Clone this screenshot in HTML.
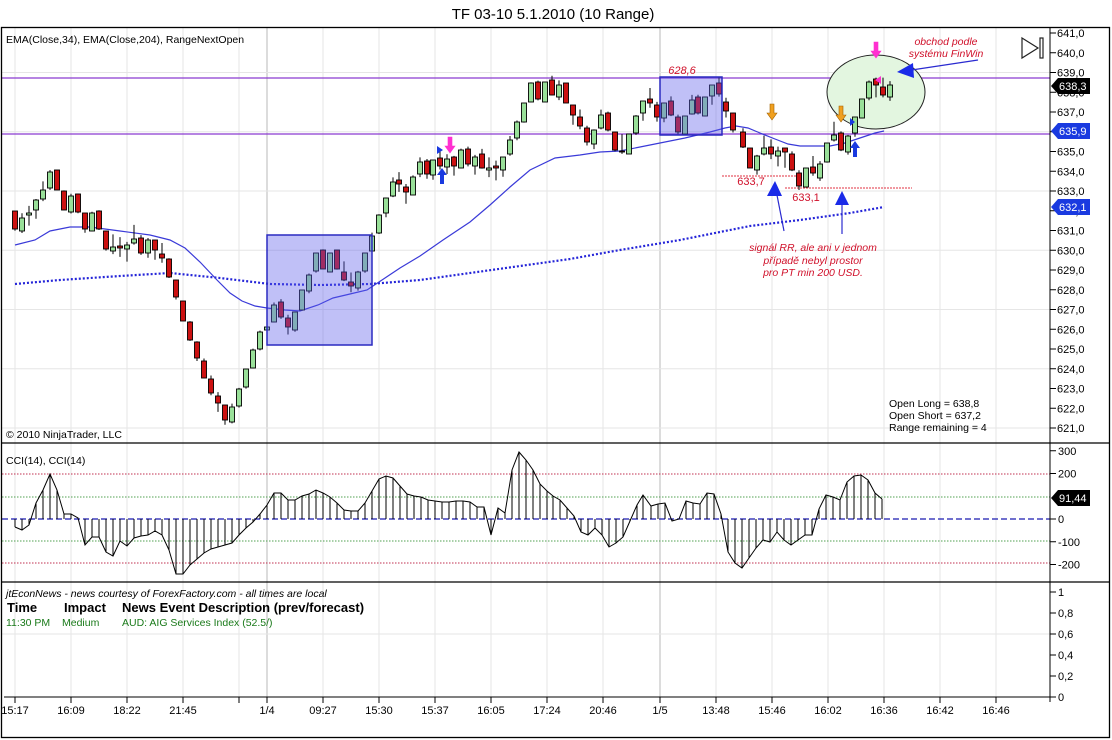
<!DOCTYPE html>
<html><head><meta charset="utf-8">
<style>
html,body{margin:0;padding:0;background:#fff;}
svg{display:block;font-family:"Liberation Sans",sans-serif;}
</style></head>
<body>
<svg id="s" width="1112" height="740" viewBox="0 0 1112 740" xmlns="http://www.w3.org/2000/svg">
<rect width="1112" height="740" fill="#fff"/>
<text x="553" y="19" font-size="15" text-anchor="middle" fill="#000">TF 03-10  5.1.2010 (10 Range)</text>
<g id="grid"></g>
<g id="main"></g>
<g id="ann"></g>
<g id="cci"></g>
<g id="axes"></g>
</svg>
<script>
const NS="http://www.w3.org/2000/svg";
function el(par,tag,attrs,txt){const e=document.createElementNS(NS,tag);for(const k in attrs)e.setAttribute(k,attrs[k]);if(txt!==undefined)e.textContent=txt;document.getElementById(par).appendChild(e);return e;}
const PX=v=>33+(641-v)*19.75;
// vertical grid
const gx=[15,71,127,183,239,323,379,435,491,547,603,716,772,828,884,940,996];
gx.forEach(x=>{el('grid','line',{x1:x,y1:28,x2:x,y2:697,stroke:'#e6e6e6','stroke-width':1});});
[267,660].forEach(x=>el('grid','line',{x1:x,y1:28,x2:x,y2:697,stroke:'#b8b8b8','stroke-width':1}));
// horizontal grid price
for(let p=621;p<=639;p+=3){const y=PX(p);el('grid','line',{x1:2,y1:y,x2:1050,y2:y,stroke:'#e6e6e6'});}
el('grid','line',{x1:2,y1:634,x2:1050,y2:634,stroke:'#e6e6e6'});
// purple lines
el('grid','line',{x1:2,y1:78,x2:1050,y2:78,stroke:'#8a3ad0','stroke-width':1.3});
el('grid','line',{x1:2,y1:134,x2:1050,y2:134,stroke:'#8a3ad0','stroke-width':1.3});
// ellipse
el('grid','ellipse',{cx:876,cy:92,rx:49,ry:37,fill:'#e3f6e0',stroke:'#222','stroke-width':1});
// EMA204 dotted
el('grid','polyline',{points:'15,284 60,280 120,276 170,273 220,278 270,284 320,285 370,284 420,280 470,273 520,266 570,259 620,250 680,240 750,226 800,220 850,213 884,207',fill:'none',stroke:'#2424d8','stroke-width':2.2,'stroke-dasharray':'2,2'});
// EMA34
el('grid','polyline',{points:'15,245 35,240 50,231 70,227 90,227 120,231 150,235 170,240 185,248 200,262 217,280 230,293 242,301 255,306 267,308 285,310 300,311 318,305 333,298 350,294 367,290 385,278 400,268 420,256 443,240 470,222 490,205 510,187 530,170 555,158 580,155 600,152 620,151 640,147 660,143 685,138 710,132 725,128 736,126 748,128 760,133 775,139 788,144 800,146 815,146 830,146 845,143 860,138 875,133 884,131',fill:'none',stroke:'#3a3ad8','stroke-width':1.2});
// dashed red support lines
el('grid','line',{x1:722,y1:176,x2:800,y2:176,stroke:'#e03040','stroke-dasharray':'2,1'});
el('grid','line',{x1:785,y1:188,x2:912,y2:188,stroke:'#e03040','stroke-dasharray':'2,1'});
// candles [x,top,bot,c]
const C=[
[15,211,229,'r'],[22,218,231,'g'],[29,213,215,'g'],[36,200,210,'g'],[43,190,199,'g'],[50,172,188,'g'],[57,170,190,'r'],[64,191,210,'r'],[71,196,212,'g'],[78,194,212,'r'],[85,213,229,'r'],[92,213,231,'g'],[99,211,229,'r'],[106,231,249,'r'],[113,247,251,'g'],[120,246,248,'r'],[127,245,249,'g'],[134,239,243,'g'],[141,238,253,'r'],[148,240,253,'g'],[155,240,250,'r'],[162,254,258,'r'],[169,259,277,'r'],[176,280,297,'r'],[183,301,321,'r'],[190,322,340,'r'],[197,342,358,'r'],[204,361,378,'r'],[211,379,393,'r'],[218,396,403,'r'],[225,405,420,'r'],[232,407,422,'g'],[239,389,406,'g'],[246,369,387,'g'],[253,350,368,'g'],[260,332,349,'g'],[267,327,330,'g'],[274,305,322,'g'],[281,302,317,'r'],[288,318,327,'r'],[295,312,330,'g'],[302,290,310,'g'],[309,275,291,'g'],[316,253,271,'g'],[323,250,269,'r'],[330,253,272,'g'],[337,250,269,'r'],[344,272,280,'r'],[351,282,286,'r'],[358,272,288,'g'],[365,253,271,'g'],[372,236,251,'g'],
[379,215,233,'g'],[386,198,213,'g'],[393,182,196,'g'],[399,180,184,'r'],[406,187,192,'r'],[413,177,195,'g'],[420,162,174,'g'],[427,161,174,'r'],[433,160,175,'g'],[440,158,166,'r'],[447,159,167,'g'],[454,157,166,'r'],[461,150,168,'g'],[468,149,164,'r'],[475,157,166,'g'],[482,154,168,'r'],[489,168,170,'g'],[496,166,168,'r'],[503,157,170,'g'],[510,140,154,'g'],[517,122,138,'g'],[524,103,122,'g'],[531,83,102,'g'],[538,82,99,'r'],[545,82,102,'g'],[552,80,95,'r'],[559,85,97,'g'],[566,83,103,'r'],[573,105,115,'r'],[580,117,126,'r'],[587,128,142,'r'],[594,130,144,'g'],[601,115,128,'g'],[608,113,130,'r'],[615,132,150,'r'],[622,151,152,'r'],[629,134,154,'g'],[636,116,133,'g'],[643,101,113,'g'],[650,99,103,'r'],[657,105,117,'r'],[664,103,118,'g'],[671,101,115,'r'],[678,117,132,'r'],[685,116,134,'g'],[692,100,114,'g'],[698,97,113,'r'],[705,97,116,'g'],[712,85,96,'g'],[719,83,94,'r'],[726,102,111,'r'],[733,113,130,'r'],
[743,132,147,'r'],[750,148,168,'r'],[757,156,170,'g'],[764,148,154,'g'],[771,147,154,'r'],[778,151,156,'g'],[785,148,152,'r'],[792,154,170,'r'],[799,173,186,'r'],[806,168,187,'g'],[813,167,173,'r'],[820,164,178,'g'],[827,143,162,'g'],[834,135,140,'g'],[841,133,150,'r'],[848,136,152,'g'],[855,117,133,'g'],[862,99,118,'g'],[869,82,98,'g'],[876,79,85,'r'],[883,87,95,'r'],[890,85,97,'g']];
C.forEach((c,i)=>{let [x,t,b,k]=c;const h=b-t;const ex=Math.max(0,19.75-h);const f=(i*37%10)/10;const wt=t-ex*f,wb=b+ex*(1-f);
el('main','line',{x1:x,y1:wt,x2:x,y2:wb,stroke:'#000','stroke-width':1});
el('main','rect',{x:x-2.5,y:t,width:5,height:Math.max(1,h),fill:k=='g'?'#99e099':'#cc1111',stroke:'#000','stroke-width':0.9});});
// boxes overlay
el('main','rect',{x:267,y:235,width:105,height:110,fill:'rgba(90,90,235,0.38)',stroke:'#2a2ac0','stroke-width':1.5});
el('main','rect',{x:660,y:77,width:62,height:58,fill:'rgba(90,90,235,0.38)',stroke:'#2a2ac0','stroke-width':1.5});
// arrows
function downArrow(x,y,col){el('ann','path',{d:`M${x-2},${y} h4 v9 h3 l-5,7 l-5,-7 h3 z`,fill:col,stroke:col==='#f0a020'?'#a06000':col,'stroke-width':0.6});}
function upArrow(x,y,col){el('ann','path',{d:`M${x-2},${y+16} h4 v-9 h3 l-5,-7 l-5,7 h3 z`,fill:col});}
downArrow(772,104,'#f0a020');downArrow(841,106,'#f0a020');
downArrow(450,137,'#ff30d0');downArrow(876,42,'#ff30d0');
upArrow(442,168,'#1a3ae0');upArrow(855,141,'#1a3ae0');
el('ann','path',{d:'M437,146 l6,4 l-6,4z',fill:'#1a3ae0'});
el('ann','path',{d:'M455,172 l-6,-4 l6,4 l0,-5z',fill:'#ff30d0'});
el('ann','path',{d:'M881,76 l-6,4 l6,4z',fill:'#ff30d0'});
el('ann','path',{d:'M850,118 l5,4 l-5,4z',fill:'#1a3ae0'});
// big annotation arrows
el('ann','line',{x1:776,y1:190,x2:784,y2:231,stroke:'#2a2ad0','stroke-width':1.2});
el('ann','path',{d:'M775,181 l-8,15 l15,0z',fill:'#1a2ae8'});
el('ann','line',{x1:842,y1:200,x2:842,y2:234,stroke:'#2a2ad0','stroke-width':1.2});
el('ann','path',{d:'M842,191 l-7,14 l14,0z',fill:'#1a2ae8'});
el('ann','line',{x1:905,y1:71,x2:978,y2:60,stroke:'#2a2ad0','stroke-width':1.2});
el('ann','path',{d:'M897,72 l16,-9 l1,15z',fill:'#1a2ae8'});
// texts
const red='#d0102a';
el('ann','text',{x:682,y:74,'font-size':11,fill:red,'text-anchor':'middle','font-style':'italic'},'628,6');
el('ann','text',{x:751,y:185,'font-size':11,fill:red,'text-anchor':'middle'},'633,7');
el('ann','text',{x:806,y:201,'font-size':11,fill:red,'text-anchor':'middle'},'633,1');
el('ann','text',{x:946,y:45,'font-size':10.5,fill:red,'text-anchor':'middle','font-style':'italic'},'obchod podle');
el('ann','text',{x:946,y:57,'font-size':10.5,fill:red,'text-anchor':'middle','font-style':'italic'},'systému FinWin');
el('ann','text',{x:813,y:251,'font-size':10.5,fill:red,'text-anchor':'middle','font-style':'italic'},'signál RR, ale ani v jednom');
el('ann','text',{x:813,y:264,'font-size':10.5,fill:red,'text-anchor':'middle','font-style':'italic'},'případě nebyl prostor');
el('ann','text',{x:813,y:276,'font-size':10.5,fill:red,'text-anchor':'middle','font-style':'italic'},'pro PT min 200 USD.');
el('ann','text',{x:889,y:407,'font-size':10.5,fill:'#000'},'Open Long = 638,8');
el('ann','text',{x:889,y:419,'font-size':10.5,fill:'#000'},'Open Short = 637,2');
el('ann','text',{x:889,y:431,'font-size':10.5,fill:'#000'},'Range remaining = 4');
el('ann','text',{x:6,y:43,'font-size':10.5,fill:'#000'},'EMA(Close,34), EMA(Close,204), RangeNextOpen');
el('ann','text',{x:6,y:438,'font-size':10.5,fill:'#000'},'© 2010 NinjaTrader, LLC');
// play icon
el('ann','path',{d:'M1022,38 L1038,48 L1022,58 Z',fill:'none',stroke:'#222','stroke-width':1.2});
el('ann','rect',{x:1040,y:38,width:3,height:20,fill:'none',stroke:'#222','stroke-width':1.2});
// CCI
const CY=v=>519-v*0.2275;
[[474,'#c03050'],[563,'#c03050'],[497,'#50a050'],[541,'#50a050']].forEach(l=>el('cci','line',{x1:2,y1:l[0],x2:1050,y2:l[0],stroke:l[1],'stroke-dasharray':'1.5,1.5'}));
el('cci','line',{x1:2,y1:519,x2:1050,y2:519,stroke:'#1a1ab0','stroke-width':1.3,'stroke-dasharray':'6,3'});
const P=[[15,527],[22,530],[29,525],[36,503],[43,490],[50,474],[57,490],[64,514],[71,514],[78,518],[85,545],[92,537],[99,537],[106,552],[113,556],[120,541],[127,546],[134,538],[141,536],[148,535],[155,531],[162,535],[169,550],[176,574],[183,574],[190,565],[197,559],[204,553],[211,549],[218,547],[225,545],[232,543],[239,535],[246,528],[253,522],[260,514],[267,505],[274,493],[281,493],[288,500],[295,500],[302,496],[309,494],[316,490],[323,493],[330,497],[337,503],[344,510],[351,511],[358,511],[365,503],[372,491],[379,479],[386,476],[393,478],[400,486],[407,494],[414,496],[421,497],[428,500],[435,501],[442,502],[449,502],[456,501],[463,501],[470,502],[477,507],[484,507],[491,535],[498,508],[505,513],[512,470],[519,452],[526,460],[533,470],[540,484],[547,491],[553,496],[560,500],[567,508],[574,516],[581,532],[588,535],[595,528],[602,535],[609,547],[616,543],[623,537],[630,521],[637,505],[643,495],[651,506],[658,504],[665,503],[672,521],[679,519],[686,501],[693,503],[700,504],[707,493],[714,494],[721,514],[728,552],[735,563],[742,568],[749,558],[756,548],[763,540],[770,542],[777,532],[784,540],[791,545],[798,540],[805,535],[812,535],[819,509],[826,495],[833,497],[840,500],[847,482],[854,476],[861,475],[868,480],[875,493],[882,499]];
P.forEach(p=>el('cci','line',{x1:p[0],y1:519,x2:p[0],y2:p[1],stroke:'#000','stroke-width':1}));
el('cci','polyline',{points:P.map(p=>p.join(',')).join(' '),fill:'none',stroke:'#000','stroke-width':1});
el('cci','text',{x:6,y:464,'font-size':10.5,fill:'#000'},'CCI(14), CCI(14)');
// news
el('cci','text',{x:6,y:597,'font-size':10.5,fill:'#000','font-style':'italic'},'jtEconNews - news courtesy of ForexFactory.com - all times are local');
el('cci','text',{x:7,y:612,'font-size':13,fill:'#000','font-weight':'bold'},'Time');
el('cci','text',{x:64,y:612,'font-size':13,fill:'#000','font-weight':'bold'},'Impact');
el('cci','text',{x:122,y:612,'font-size':13,fill:'#000','font-weight':'bold'},'News Event Description (prev/forecast)');
el('cci','text',{x:6,y:626,'font-size':10.5,fill:'#1a7a1a'},'11:30 PM');
el('cci','text',{x:62,y:626,'font-size':10.5,fill:'#1a7a1a'},'Medium');
el('cci','text',{x:122,y:626,'font-size':10.5,fill:'#1a7a1a'},'AUD: AIG Services Index (52.5/)');
// panel borders
el('axes','rect',{x:1.5,y:27.5,width:1108,height:710,fill:'none',stroke:'#000','stroke-width':1.3});
el('axes','line',{x1:1,y1:443,x2:1110,y2:443,stroke:'#000','stroke-width':1.3});
el('axes','line',{x1:1,y1:582,x2:1110,y2:582,stroke:'#000','stroke-width':1.3});
el('axes','line',{x1:1050,y1:28,x2:1050,y2:702,stroke:'#000','stroke-width':1});
el('axes','line',{x1:4,y1:697,x2:1050,y2:697,stroke:'#000','stroke-width':1});
// price axis
for(let p=621;p<=641;p++){const y=PX(p);el('axes','line',{x1:1050,y1:y,x2:1056,y2:y,stroke:'#000'});el('axes','text',{x:1057,y:y+4,'font-size':11,fill:'#000'},p+',0');}
function tag(y,txt,bg){el('axes','path',{d:`M1051,${y} l7,-8 h32 v16 h-32 z`,fill:bg});el('axes','text',{x:1059,y:y+4,'font-size':11,fill:'#fff'},txt);}
tag(86,'638,3','#000');tag(131,'635,9','#1a3ae0');tag(207,'632,1','#1a3ae0');
// CCI axis
[300,200,0,-100,-200].forEach(v=>{const y=CY(v);el('axes','line',{x1:1050,y1:y,x2:1056,y2:y,stroke:'#000'});el('axes','text',{x:1058,y:y+4,'font-size':11,fill:'#000'},String(v));});
tag(498,'91,44','#000');
// news axis
['1','0,8','0,6','0,4','0,2','0'].forEach((t,i)=>{const y=592+i*21;el('axes','line',{x1:1050,y1:y,x2:1056,y2:y,stroke:'#000'});el('axes','text',{x:1058,y:y+4,'font-size':11,fill:'#000'},t);});
// time axis
const TL=[[15,'15:17'],[71,'16:09'],[127,'18:22'],[183,'21:45'],[239,''],[267,'1/4'],[323,'09:27'],[379,'15:30'],[435,'15:37'],[491,'16:05'],[547,'17:24'],[603,'20:46'],[660,'1/5'],[716,'13:48'],[772,'15:46'],[828,'16:02'],[884,'16:36'],[940,'16:42'],[996,'16:46']];
TL.forEach(t=>{el('axes','line',{x1:t[0],y1:697,x2:t[0],y2:703,stroke:'#000'});if(t[1])el('axes','text',{x:t[0],y:714,'font-size':11,fill:'#000','text-anchor':'middle'},t[1]);});
</script>
</body></html>
